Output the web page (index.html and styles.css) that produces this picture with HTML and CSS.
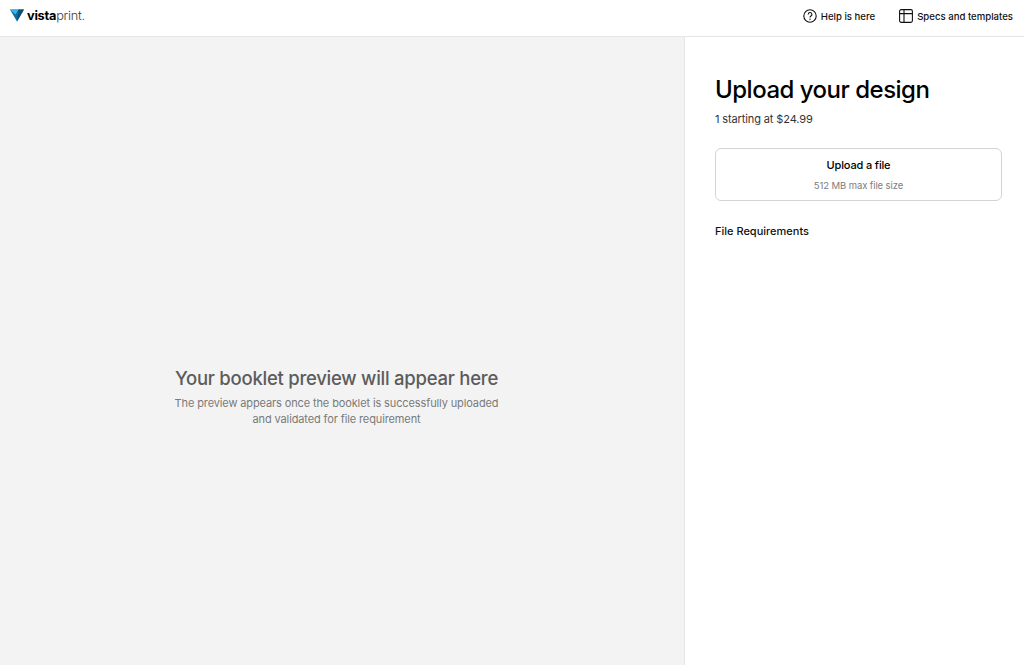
FILE: index.html
```html
<!DOCTYPE html>
<html lang="en">
<head>
<meta charset="utf-8">
<title>Upload your design</title>
<link rel="stylesheet" href="styles.css">
</head>
<body>
<header class="topbar">
  <a class="logo" href="#">
    <svg class="logo-mark" width="14" height="13" viewBox="0 0 14 13" aria-hidden="true">
      <polygon points="0,0.5 14,0.5 7,12.5" fill="#0b6fa0"/>
      <polygon points="0,0.5 8.5,0.5 5.5,5.5" fill="#35b5e5"/>
      <polygon points="8.5,0.5 14,0.5 7,12.5" fill="#0a4f78"/>
    </svg>
    <span class="logo-text"><b>vista</b>print<i>.</i></span>
  </a>
  <nav class="topnav">
    <a class="navlink" href="#">
      <svg width="14" height="14" viewBox="0 0 14 14" fill="none" stroke="#111" aria-hidden="true">
        <circle cx="7" cy="7" r="6.2" stroke-width="1.1"/>
        <path d="M5.2 5.4a1.85 1.85 0 1 1 2.7 1.65c-.6.33-.9.7-.9 1.35" stroke-width="1.1"/>
        <circle cx="7" cy="10.3" r=".7" fill="#111" stroke="none"/>
      </svg>
      Help is here
    </a>
    <a class="navlink" href="#">
      <svg width="14" height="14" viewBox="0 0 14 14" fill="none" stroke="#111" stroke-width="1.1" aria-hidden="true">
        <rect x=".6" y=".6" width="12.8" height="12.8" rx="1.6"/>
        <path d="M.6 4.6h12.8M5 .6v12.8"/>
      </svg>
      Specs and templates
    </a>
  </nav>
</header>
<main class="layout">
  <section class="preview">
    <h2 class="preview-title">Your booklet preview will appear here</h2>
    <p class="preview-copy">The preview appears once the booklet is successfully uploaded<br>and validated for file requirement</p>
  </section>
  <aside class="panel">
    <h1 class="panel-title">Upload your design</h1>
    <p class="price">1 starting at $24.99</p>
    <button class="upload" type="button">
      <span class="upload-label">Upload a file</span>
      <span class="upload-note">512 MB max file size</span>
    </button>
    <a class="requirements" href="#">File Requirements</a>
  </aside>
</main>
</body>
</html>
```
FILE: styles.css
```css
* { box-sizing: border-box; }
html, body { height: 100%; }
body {
  margin: 0;
  display: flex;
  flex-direction: column;
  height: 665px;
  overflow: hidden;
  background: #fff;
  color: #000;
  font-family: Inter, "Liberation Sans", sans-serif;
}
a { color: inherit; text-decoration: none; }

.topbar {
  flex: 0 0 37px;
  display: flex;
  justify-content: space-between;
  align-items: center;
  height: 37px;
  padding: 0 11px 6px 10px;
  border-bottom: 1px solid #e6e6e6;
}
.logo { display: flex; align-items: center; gap: 3px; }
.logo-text { font-size: 12.75px; letter-spacing: -0.25px; color: #3a3a3a; font-weight: 300; }
.logo-text b { font-weight: 700; color: #000; }
.logo-text i { font-style: normal; }

.topnav { display: flex; gap: 23px; padding-top: 2px; }
.navlink { display: flex; align-items: center; gap: 4px; font-size: 9.6px; font-weight: 500; color: #111; }
.navlink:last-child { margin-left: 1px; }

.layout { flex: 1; display: flex; min-height: 0; }
.preview {
  flex: 0 0 685px;
  background: #f3f3f3;
  border-right: 1px solid #e6e6e6;
  display: flex;
  flex-direction: column;
  align-items: center;
  justify-content: center;
  text-align: center;
  padding: 89px 11px 0 0;
}
.preview-title { margin: 0; font-size: 18.5px; line-height: 26px; font-weight: 500; color: #5c5c5c; letter-spacing: -0.25px; }
.preview-copy { margin: 4px 0 0; font-size: 11px; line-height: 16px; font-weight: 400; color: #7a7a7a; letter-spacing: -0.12px; }

.panel { flex: 1; padding: 35px 22px 0 30px; }
.panel-title { margin: 0; font-size: 24px; line-height: 35px; font-weight: 500; letter-spacing: -0.5px; }
.price { margin: 4px 0 0; font-size: 11px; line-height: 16px; color: #333; letter-spacing: -0.12px; }
.upload {
  display: flex;
  flex-direction: column;
  align-items: center;
  width: 100%;
  height: 53px;
  margin-top: 21px;
  padding: 8px 0 0;
  background: #fff;
  border: 1px solid #d4d4d4;
  border-radius: 6px;
  font-family: inherit;
}
.upload-label { font-size: 11px; line-height: 16px; font-weight: 500; color: #000; letter-spacing: -0.15px; }
.upload-note { margin-top: 6px; font-size: 9.5px; line-height: 13px; color: #7d7d7d; letter-spacing: -0.1px; }
.requirements { display: block; margin-top: 22px; font-size: 11px; line-height: 16px; font-weight: 500; color: #111; }
```
